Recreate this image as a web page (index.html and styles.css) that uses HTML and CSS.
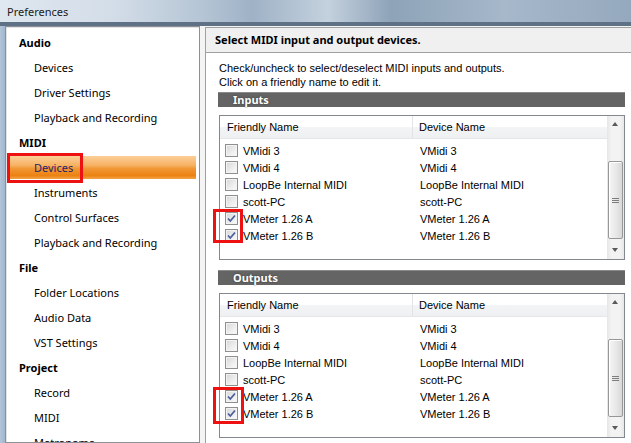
FILE: index.html
```html
<!DOCTYPE html>
<html lang="en">

<head>
    <meta charset="UTF-8">
    <title>Preferences</title>
    <link rel="stylesheet" href="styles.css">
</head>

<body>
    <div class="window">
        <div class="titlebar">Preferences</div>
        <div class="client">
            <ul class="nav">
                <li class="cat">Audio</li>
                <li class="item">Devices</li>
                <li class="item">Driver Settings</li>
                <li class="item">Playback and Recording</li>
                <li class="cat">MIDI</li>
                <li class="item selected">Devices<span class="callout callout-nav"></span></li>
                <li class="item">Instruments</li>
                <li class="item">Control Surfaces</li>
                <li class="item">Playback and Recording</li>
                <li class="cat">File</li>
                <li class="item">Folder Locations</li>
                <li class="item">Audio Data</li>
                <li class="item">VST Settings</li>
                <li class="cat">Project</li>
                <li class="item">Record</li>
                <li class="item">MIDI</li>
                <li class="item">Metronome</li>
            </ul>

            <div class="pane">
                <div class="pane-head">Select MIDI input and output devices.</div>
                <div class="pane-body">
                    <p class="hint">Check/uncheck to select/deselect MIDI inputs and outputs.<br>Click on a friendly name to edit it.</p>

                    <div class="section-bar">Inputs</div>
                    <div class="list">
                        <div class="list-main">
                            <div class="list-head">
                                <div class="col col-friendly">Friendly Name</div>
                                <div class="col col-device">Device Name</div>
                            </div>
                            <div class="rows">
                                <div class="row"><span class="col col-friendly"><span class="check"></span>VMidi 3</span><span class="col col-device">VMidi 3</span></div>
                                <div class="row"><span class="col col-friendly"><span class="check"></span>VMidi 4</span><span class="col col-device">VMidi 4</span></div>
                                <div class="row"><span class="col col-friendly"><span class="check"></span>LoopBe Internal MIDI</span><span class="col col-device">LoopBe Internal MIDI</span></div>
                                <div class="row"><span class="col col-friendly"><span class="check"></span>scott-PC</span><span class="col col-device">scott-PC</span></div>
                                <div class="row"><span class="col col-friendly"><span class="check checked"><svg viewBox="0 0 11 11" width="11" height="11"><path d="M2 5.5 L4.3 8 L9 2.5" /></svg></span>VMeter 1.26 A</span><span class="col col-device">VMeter 1.26 A</span></div>
                                <div class="row"><span class="col col-friendly"><span class="check checked"><svg viewBox="0 0 11 11" width="11" height="11"><path d="M2 5.5 L4.3 8 L9 2.5" /></svg></span>VMeter 1.26 B</span><span class="col col-device">VMeter 1.26 B</span></div>
                                <span class="callout callout-in"></span>
                            </div>
                        </div>
                        <div class="scrollbar">
                            <div class="arrow arrow-up"></div>
                            <div class="thumb"><span class="grip"></span></div>
                            <div class="arrow arrow-down"></div>
                        </div>
                    </div>

                    <div class="section-bar">Outputs</div>
                    <div class="list">
                        <div class="list-main">
                            <div class="list-head">
                                <div class="col col-friendly">Friendly Name</div>
                                <div class="col col-device">Device Name</div>
                            </div>
                            <div class="rows">
                                <div class="row"><span class="col col-friendly"><span class="check"></span>VMidi 3</span><span class="col col-device">VMidi 3</span></div>
                                <div class="row"><span class="col col-friendly"><span class="check"></span>VMidi 4</span><span class="col col-device">VMidi 4</span></div>
                                <div class="row"><span class="col col-friendly"><span class="check"></span>LoopBe Internal MIDI</span><span class="col col-device">LoopBe Internal MIDI</span></div>
                                <div class="row"><span class="col col-friendly"><span class="check"></span>scott-PC</span><span class="col col-device">scott-PC</span></div>
                                <div class="row"><span class="col col-friendly"><span class="check checked"><svg viewBox="0 0 11 11" width="11" height="11"><path d="M2 5.5 L4.3 8 L9 2.5" /></svg></span>VMeter 1.26 A</span><span class="col col-device">VMeter 1.26 A</span></div>
                                <div class="row"><span class="col col-friendly"><span class="check checked"><svg viewBox="0 0 11 11" width="11" height="11"><path d="M2 5.5 L4.3 8 L9 2.5" /></svg></span>VMeter 1.26 B</span><span class="col col-device">VMeter 1.26 B</span></div>
                                <span class="callout callout-out"></span>
                            </div>
                        </div>
                        <div class="scrollbar">
                            <div class="arrow arrow-up"></div>
                            <div class="thumb"><span class="grip"></span></div>
                            <div class="arrow arrow-down"></div>
                        </div>
                    </div>
                </div>
            </div>
        </div>
    </div>
</body>

</html>
```

FILE: styles.css
```css
body {
    margin: 0;
    width: 631px;
    height: 443px;
    overflow: hidden;
    font-family: 'Noto Sans', 'Liberation Sans', sans-serif;
    font-size: 11px;
    color: #000;
}

.window {
    height: 443px;
    display: flex;
    flex-direction: column;
}

.titlebar {
    height: 22px;
    line-height: 24px;
    padding-left: 7px;
    color: #1b1b1b;
    font-size: 11px;
    background: linear-gradient(90deg, #dfe7ef 0%, #d3dde8 18%, #b5c5d5 32%, #9fb2c6 40%, #c4d1de 52%, #8ea3b8 62%, #a6b8ca 80%, #95a9be 100%);
    border-bottom: 4px solid #5f7185;
}

.client {
    flex: 1;
    display: flex;
    min-height: 0;
    padding-left: 5px;
    background: linear-gradient(90deg, #b4c6d8 0, #9fb7cf 5px, #f4f4f4 5px);
}

/* left tree */
.nav {
    width: 195px;
    box-sizing: border-box;
    margin: 0;
    padding: 3px 0 0;
    list-style: none;
    background: #fff;
    border: 1px solid #8c9199;
    box-shadow: inset 1px 1px 0 #e2e2e2;
    overflow: hidden;
}

.nav li {
    height: 25px;
    line-height: 25px;
    position: relative;
    white-space: nowrap;
}

.cat {
    font-weight: bold;
    padding-left: 13px;
}

.item {
    padding-left: 28px;
}

.item.selected {
    height: 23px;
    line-height: 23px;
    margin: 1px 3px 1px 4px;
    padding-left: 24px;
    color: #22226a;
    background: linear-gradient(#fbcf98 0%, #f7b264 40%, #f19634 55%, #ec8212 85%, #f3a447 100%);
}

.callout {
    position: absolute;
    box-sizing: border-box;
    border: 3px solid #ee1111;
}

.callout-nav {
    left: -3px;
    top: -3px;
    width: 76px;
    height: 30px;
}

/* right pane */
.pane {
    flex: 1;
    margin-left: 5px;
    margin-top: 1px;
    background: #fff;
    border-left: 1px solid #a0a0a0;
}

.pane-head {
    height: 26px;
    box-sizing: border-box;
    line-height: 24px;
    padding-left: 9px;
    font-weight: bold;
    background: #f0f0f0;
    border-top: 1px solid #a0a0a0;
    border-bottom: 1px solid #a0a0a0;
}

.pane-body {
    width: 407px;
    padding: 8px 0 0 12px;
    font-family: 'Liberation Sans', Arial, sans-serif;
    font-size: 11px;
}

.hint {
    margin: 0 0 3px 1px;
    line-height: 14px;
}

.section-bar {
    height: 15px;
    line-height: 14px;
    padding-left: 15px;
    box-sizing: border-box;
    background: #646464;
    border-top: 1px solid #8a8a8a;
    color: #fff;
    font-family: 'Noto Sans', sans-serif;
    font-weight: bold;
    font-size: 11px;
    text-shadow: 0 0 2px #333;
}

.list {
    display: flex;
    height: 145px;
    box-sizing: border-box;
    margin: 8px 0 10px 1px;
    border: 1px solid #828790;
    background: #fff;
}

.list-main {
    flex: 1;
}

.list-head {
    display: flex;
    height: 23px;
    line-height: 23px;
    background: linear-gradient(#ffffff 0%, #ffffff 50%, #f3f4f6 50%, #eef0f2 100%);
    border-bottom: 1px solid #e4e6e9;
    box-sizing: border-box;
}

.list-head .col-friendly {
    padding-left: 7px;
    border-right: 1px solid #e1e3e7;
}

.col-friendly {
    width: 193px;
    box-sizing: border-box;
}

.col-device {
    padding-left: 6px;
}

.rows {
    position: relative;
    padding-top: 3px;
}

.row {
    display: flex;
    align-items: center;
    height: 17px;
}

.row .col-friendly {
    display: flex;
    align-items: center;
    gap: 5px;
    padding-left: 5px;
}

.row .col-device {
    padding-left: 7px;
}

.check {
    width: 13px;
    height: 13px;
    box-sizing: border-box;
    border: 1px solid #8e8f8f;
    background: linear-gradient(135deg, #d4d6d9 0%, #eeeeee 60%, #fbfbfb 100%);
    box-shadow: inset 0 0 0 1px #f3f3f3;
    display: flex;
    align-items: center;
    justify-content: center;
}

.check svg path {
    fill: none;
    stroke: #4a5f9c;
    stroke-width: 1.8;
}

.callout-in {
    left: -7px;
    top: 70px;
    width: 30px;
    height: 34px;
}

.callout-out {
    left: -7px;
    top: 70px;
    width: 31px;
    height: 37px;
}

/* scrollbar */
.scrollbar {
    width: 17px;
    display: flex;
    flex-direction: column;
    background: linear-gradient(90deg, #e6e6e6, #f3f3f3 25%, #f3f3f3 75%, #e8e8e8);
}

.arrow {
    height: 17px;
    position: relative;
}

.arrow::after {
    content: "";
    position: absolute;
    left: 5px;
    top: 6px;
    border-left: 3px solid transparent;
    border-right: 3px solid transparent;
}

.arrow-up::after {
    border-bottom: 4px solid #5a5a5a;
}

.arrow-down {
    margin-top: auto;
}

.arrow-down::after {
    border-top: 4px solid #5a5a5a;
}

.thumb {
    margin: 28px 1px 0;
    height: 78px;
    box-sizing: border-box;
    border: 1px solid #979797;
    border-radius: 2px;
    background: linear-gradient(90deg, #f5f5f5 0%, #e9e9e9 50%, #d8d8d8 100%);
    box-shadow: inset 1px 1px 0 #fff;
    display: flex;
    align-items: center;
    justify-content: center;
}

.grip {
    width: 7px;
    height: 5px;
    background: repeating-linear-gradient(#7d7d7d 0, #7d7d7d 1px, transparent 1px, transparent 2px);
}
```
